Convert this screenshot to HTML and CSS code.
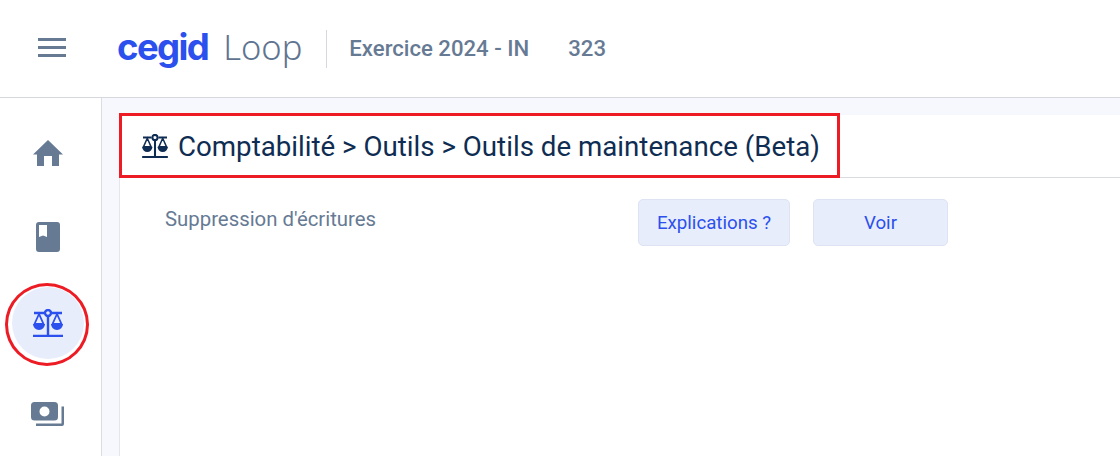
FILE: index.html
```html
<!DOCTYPE html>
<html lang="fr">
<head>
<meta charset="utf-8">
<title>Cegid Loop</title>
<link rel="stylesheet" href="styles.css">
</head>
<body>
<div class="app">
  <header class="topbar">
    <button class="menu-btn" aria-label="Menu">
      <svg width="28" height="20" viewBox="0 0 28 20"><path class="fill-slate" d="M0 0h28v3H0zM0 8h28v3H0zM0 16h28v3H0z"/></svg>
    </button>
    <div class="brand"><span class="brand-cegid">cegid</span><span class="brand-loop">Loop</span></div>
    <div class="context"><span>Exercice 2024 - IN</span><span class="context-num">323</span></div>
  </header>
  <div class="body">
    <nav class="sidebar">
      <a class="nav-item">
        <svg width="30" height="26" viewBox="0 0 30 26"><path class="fill-slate" d="M15 0 30 14.500h-4V26h-7V16h-8v10H4V14.500H0z"/></svg>
      </a>
      <a class="nav-item">
        <svg width="24" height="30" viewBox="0 0 24 30"><path class="fill-slate" fill-rule="evenodd" d="M3 0h18a3 3 0 0 1 3 3v24a3 3 0 0 1-3 3H3a3 3 0 0 1-3-3V3a3 3 0 0 1 3-3zM3 3v12l4-1.500 4 1.500V3z"/></svg>
      </a>
      <a class="nav-item nav-item-active">
        <svg width="30" height="28" viewBox="0 0 30 28"><use href="#scales"/></svg>
      </a>
      <a class="nav-item nav-item-last">
        <svg width="33" height="24" viewBox="0 0 33 24"><path class="fill-slate" fill-rule="evenodd" d="M3.500 0h20a3.500 3.500 0 0 1 3.500 3.500v11.500a3.500 3.500 0 0 1-3.500 3.500h-20A3.500 3.500 0 0 1 0 15V3.500A3.500 3.500 0 0 1 3.500 0zm10 4.500a5 5 0 1 0 0 10 5 5 0 0 0 0-10z"/><path class="fill-slate" d="M30.500 4.500H33V22a2 2 0 0 1-2 2H5v-2.500h25.500z"/></svg>
      </a>
    </nav>
    <main class="main">
      <section class="panel">
        <h1 class="title">
          <svg class="title-icon" width="26" height="24" viewBox="0 0 30 28"><use href="#scales"/></svg>
          <span>Comptabilité &gt; Outils &gt; Outils de maintenance (Beta)</span>
        </h1>
        <div class="row">
          <span class="row-label">Suppression d'écritures</span>
          <div class="row-actions">
            <button class="btn btn-explain">Explications ?</button>
            <button class="btn btn-view">Voir</button>
          </div>
        </div>
      </section>
    </main>
  </div>
  <div class="mark-box"></div>
  <div class="mark-circle"></div>
</div>
<svg class="defs" width="0" height="0">
  <defs>
    <g id="scales" fill="none" stroke="currentColor" stroke-width="2.400">
      <path d="M1 4h10M19 4h10M15 7v20M0 27h30" />
      <circle cx="15" cy="4" r="3"/>
      <path stroke-width="1.800" d="M6 5 1.500 15h9zM24 5l-4.500 10h9z"/>
      <path fill="currentColor" stroke="none" d="M0 15h12a6 6 0 0 1-12 0zM18 15h12a6 6 0 0 1-12 0z"/>
    </g>
  </defs>
</svg>
</body>
</html>
```
FILE: styles.css
```css
* { box-sizing: border-box; }
html, body { margin: 0; padding: 0; height: 100%; overflow: hidden; }
body { font-family: Roboto, "Liberation Sans", sans-serif; background: #fff; color: #0f2d52; }
.app { position: relative; width: 1120px; height: 456px; display: flex; flex-direction: column; }
.fill-slate { fill: #667a94; }
.defs { position: absolute; }

.topbar { height: 98px; flex: none; display: flex; align-items: center; padding-left: 38px; border-bottom: 1px solid #d6d8dd; background: #fff; }
.menu-btn { border: 0; background: none; padding: 0; width: 28px; height: 19px; display: flex; margin-top: -3px; }
.brand { display: flex; align-items: baseline; margin-left: 51px; padding-right: 24px; height: 38px; border-right: 1px solid #d6d8dd; line-height: 34px; }
.brand-cegid { font-family: Inter, sans-serif; font-weight: 700; font-size: 36.500px; color: #2b50ee; letter-spacing: -1.600px; }
.brand-loop { font-family: "Noto Sans", sans-serif; font-weight: 300; font-size: 34.500px; color: #5f7490; margin-left: 15px; }
.context { display: flex; gap: 39px; margin-left: 22px; font-size: 22.150px; font-weight: 500; color: #667a94; margin-top: -2px; }

.body { flex: 1; display: flex; min-height: 0; }
.sidebar { width: 102px; flex: none; border-right: 1px solid #dcdee3; background: #fff; display: flex; flex-direction: column; align-items: center; padding-top: 13px; padding-right: 6px; }
.nav-item { width: 80px; height: 84px; display: flex; align-items: center; justify-content: center; flex: none; }
.nav-item-active { width: 72px; height: 72px; margin: 8px 0; border-radius: 50%; background: #e8edfb; color: #2b50ee; }
.nav-item-last { margin-top: 5px; }

.main { flex: 1; background: #f7f8fd; padding: 17px 0 0 17px; min-width: 0; }
.panel { height: 100%; background: #fff; border-left: 1px solid #e4e6ea; }
.title { margin: 0; height: 63px; display: flex; align-items: center; gap: 10px; padding-left: 22px; border-bottom: 1px solid #d9dbe0; font-size: 27.700px; font-weight: 400; color: #0f2d52; }
.title-icon { color: #0f2d52; flex: none; }

.row { display: flex; align-items: flex-start; padding: 21px 0 0 45px; }
.row-label { width: 473px; font-size: 20.350px; line-height: 40px; color: #667a94; flex: none; }
.row-actions { display: flex; gap: 23px; }
.btn { height: 47px; border: 1px solid #dde3f3; border-radius: 5px; background: #e8edfb; color: #2b50ee; font-family: inherit; font-size: 18.700px; padding: 0; }
.btn-explain { width: 152px; }
.btn-view { width: 135px; }

.mark-box { position: absolute; left: 119px; top: 113px; width: 721px; height: 65px; border: 3px solid #ed1c24; }
.mark-circle { position: absolute; left: 5px; top: 283px; width: 84px; height: 83px; border: 3px solid #ed1c24; border-radius: 50%; }
```
